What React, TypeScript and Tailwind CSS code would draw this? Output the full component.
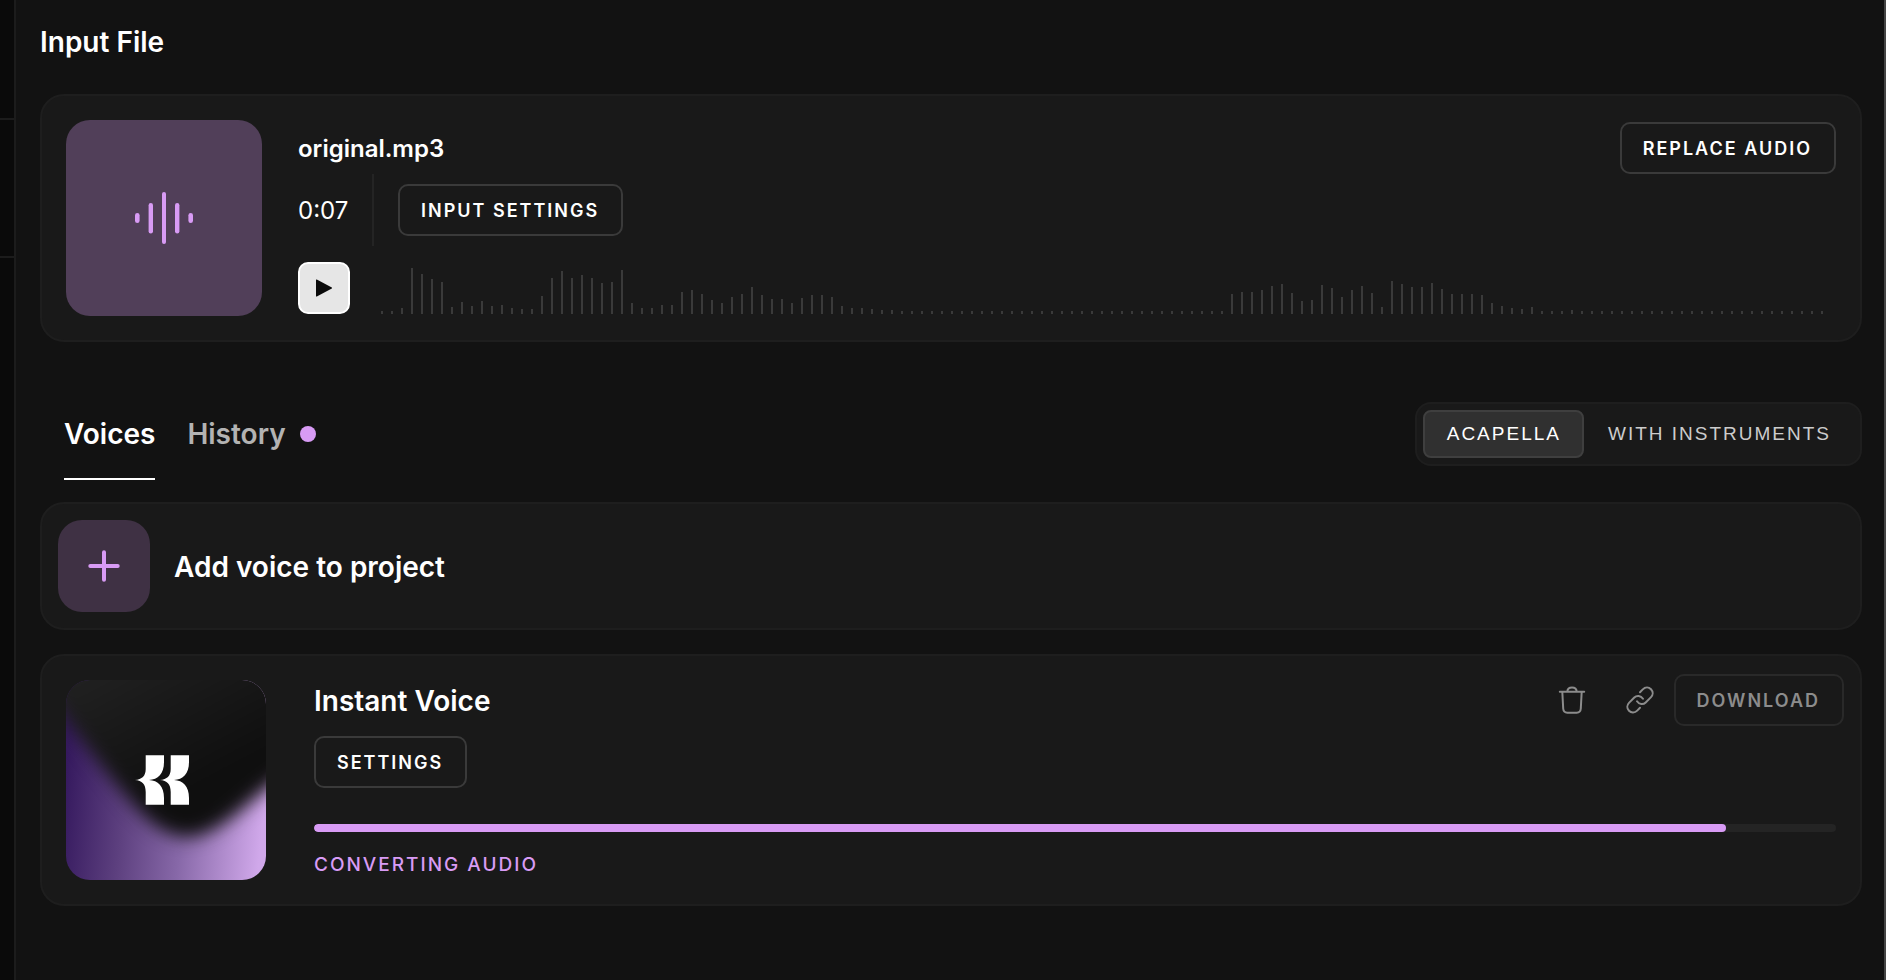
import React, { useState } from 'react';
import { clsx } from 'clsx';

interface OutlineButtonProps {
  children: React.ReactNode;
  disabled?: boolean;
  className?: string;
}

// Peak heights of the loaded clip, one per bar
const PEAKS: number[] = [
  3, 3, 6, 46, 40, 35, 32, 7, 12, 8, 13, 8, 9, 6, 5, 5, 18, 36, 43, 36, 39, 36, 31, 32, 44, 11, 6, 6, 9, 9,
  22, 24, 20, 14, 11, 17, 20, 27, 19, 15, 15, 11, 16, 19, 19, 17, 8, 6, 6, 5, 4, 4,
  ...Array(33).fill(3),
  20, 22, 22, 24, 28, 30, 21, 13, 14, 29, 26, 17, 24, 28, 21, 7, 33, 30, 27, 27, 31, 25, 20, 20, 20, 19,
  11, 8, 6, 5, 7, 3, 3, 3, 4,
  ...Array(25).fill(3),
];

const card = 'rounded-3xl border-2 border-[#1e1e1e] bg-[#191919]';
const title = 'pt-0.5 text-[28px] font-semibold leading-9';

function OutlineButton({ children, disabled, className }: OutlineButtonProps) {
  return (
    <button
      type="button"
      disabled={disabled}
      className={clsx(
        'h-[52px] flex-shrink-0 whitespace-nowrap rounded-[10px] border-2 pl-[21px] pr-[22px] pt-0.5 text-lg font-semibold uppercase tracking-[2px]',
        disabled ? 'border-[#292929] text-[#8c8c8c]' : 'border-[#3a3a3a] text-white',
        className
      )}
    >
      {children}
    </button>
  );
}

function Waveform() {
  return (
    <svg
      className="h-[52px] min-w-0 flex-1"
      viewBox="0 0 1455 52"
      preserveAspectRatio="xMinYMax meet"
      fill="#3a3a3a"
      aria-hidden="true"
    >
      {PEAKS.map((h, i) => (
        <rect key={i} x={i * 10} y={52 - h} width="2" height={h} />
      ))}
    </svg>
  );
}

function VoiceArtwork() {
  return (
    <svg className="h-[200px] w-[200px] flex-shrink-0 rounded-3xl" viewBox="0 0 200 200" aria-hidden="true">
      <defs>
        <linearGradient id="glow" x1="0" y1="0.45" x2="1" y2="0.55">
          <stop offset="0" stopColor="#361a5f" />
          <stop offset="0.3" stopColor="#5d407f" />
          <stop offset="0.6" stopColor="#8768a8" />
          <stop offset="1" stopColor="#d0a8ea" />
        </linearGradient>
        <linearGradient id="shade" gradientUnits="userSpaceOnUse" x1="20" y1="0" x2="110" y2="170">
          <stop offset="0" stopColor="#202020" />
          <stop offset="0.75" stopColor="#0f0f0f" />
        </linearGradient>
        <filter
          id="soft"
          filterUnits="userSpaceOnUse"
          x="-80"
          y="-80"
          width="360"
          height="360"
          colorInterpolationFilters="sRGB"
        >
          <feGaussianBlur stdDeviation="9" />
        </filter>
      </defs>
      <rect width="200" height="200" fill="url(#glow)" />
      <path
        d="M-60-60H260V66L200 109C178 127 148 157 122 157C96 157 76 135 60 116C40 93 22 69 0 40L-60-50Z"
        fill="url(#shade)"
        filter="url(#soft)"
      />
      <g fill="#fff">
        <path d="M98 75.3V82C98 94 92 99.6 83 100C92 100.4 98 106 98 118V124.7H79.7V112C79.7 104 76 100.6 69 100C76 99.4 79.7 96 79.7 89V75.3Z" />
        <path d="M123 75.3V82C123 94 117 99.6 108 100C117 100.4 123 106 123 118V124.7H104.7V112C104.7 104 101 100.6 94 100C101 99.4 104.7 96 104.7 89V75.3Z" />
      </g>
    </svg>
  );
}

export default function App() {
  const [tab, setTab] = useState<'voices' | 'history'>('voices');
  const [mode, setMode] = useState<'acapella' | 'instruments'>('acapella');
  const progress = 92.8;

  const modes = [
    { id: 'acapella', label: 'Acapella' },
    { id: 'instruments', label: 'With instruments' },
  ] as const;

  return (
    <div className="flex min-h-screen bg-[#121212] font-['Inter',sans-serif] text-white">
      {/* ── Edge of the side panel ── */}
      <aside className="w-4 flex-shrink-0 border-r-2 border-[#1c1c1c] bg-[#0a0a0a]">
        <div className="h-[120px] border-b-2 border-[#1c1c1c]" />
        <div className="h-[138px] border-b-2 border-[#1c1c1c]" />
      </aside>

      <main className="min-w-0 flex-1 border-r-2 border-[#444444] pl-6 pr-[22px]">
        <div className="pb-[34px] pt-[22px]">
          <h1 className={title}>Input File</h1>
        </div>

        {/* ── Input file ── */}
        <section className={clsx(card, 'flex items-center gap-9 p-6')}>
          <div className="flex h-[196px] w-[196px] flex-shrink-0 items-center justify-center rounded-3xl bg-[#513f59]">
            <svg className="h-[52px] w-[58px]" viewBox="0 0 58 52" fill="#d89bf5" aria-hidden="true">
              <rect x="0" y="21" width="4.6" height="10" rx="2.3" />
              <rect x="13.6" y="11" width="4.4" height="30.5" rx="2.2" />
              <rect x="27" y="0" width="4" height="52" rx="2" />
              <rect x="40" y="11" width="4.4" height="30.5" rx="2.2" />
              <rect x="53.4" y="21" width="4.6" height="10" rx="2.3" />
            </svg>
          </div>

          <div className="min-w-0 flex-1">
            <div className="flex items-center justify-between">
              <h2 className="pt-0.5 text-2xl font-semibold">original.mp3</h2>
              <OutlineButton>Replace audio</OutlineButton>
            </div>
            <div className="flex h-[72px] items-center">
              <span className="w-[74px] pt-0.5 text-2xl">0:07</span>
              <div className="mr-6 h-full w-0.5 bg-[#242424]" />
              <OutlineButton>Input settings</OutlineButton>
            </div>
            <div className="mt-4 flex items-center gap-[31px]">
              <button
                type="button"
                aria-label="Play"
                className="flex h-[52px] w-[52px] flex-shrink-0 items-center justify-center rounded-[10px] border-2 border-white bg-[#e6e6e6]"
              >
                <svg className="h-[18px] w-4" viewBox="0 0 16 18" fill="#0a0a0a">
                  <path d="M0 1Q0 .2 .8 .6L15.800 8.600Q16.400 9 15.800 9.400L.8 17.400Q0 17.800 0 17Z" />
                </svg>
              </button>
              <Waveform />
            </div>
          </div>
        </section>

        {/* ── Tabs ── */}
        <div className="mt-[60px] flex items-start justify-between">
          <div className="flex gap-8 pl-6" role="tablist">
            <button
              type="button"
              role="tab"
              aria-selected={tab === 'voices'}
              onClick={() => setTab('voices')}
              className={clsx(
                'h-[78px] border-b-2 pb-3 text-[28px] font-semibold',
                tab === 'voices' ? 'border-white text-white' : 'border-transparent text-[#b3b3b3]'
              )}
            >
              Voices
            </button>
            <button
              type="button"
              role="tab"
              aria-selected={tab === 'history'}
              onClick={() => setTab('history')}
              className={clsx(
                'flex h-[78px] items-center gap-3.5 border-b-2 pb-3 text-[28px] font-semibold',
                tab === 'history' ? 'border-white text-white' : 'border-transparent text-[#b3b3b3]'
              )}
            >
              History
              <span className="h-4 w-4 rounded-full bg-[#d89bf5]" />
            </button>
          </div>

          <div className="flex h-16 rounded-2xl border-2 border-[#1e1e1e] bg-[#191919] p-1.5">
            {modes.map((m) => (
              <button
                key={m.id}
                type="button"
                aria-pressed={mode === m.id}
                onClick={() => setMode(m.id)}
                className={clsx(
                  "rounded-lg border-2 pl-[22px] pr-[21px] font-['Liberation_Sans',sans-serif] text-[19px] uppercase tracking-[2px]",
                  mode === m.id
                    ? 'border-[#3f3f3f] bg-[#303030] text-white'
                    : 'border-transparent text-[#cccccc]'
                )}
              >
                {m.label}
              </button>
            ))}
          </div>
        </div>

        {/* ── Add voice ── */}
        <button type="button" className={clsx(card, 'mt-[22px] flex w-full items-center gap-6 px-4 py-4 text-left')}>
          <span className="flex h-[92px] w-[92px] items-center justify-center rounded-3xl bg-[#3f3144]">
            <svg className="h-8 w-8" viewBox="0 0 32 32" stroke="#d89bf5" strokeWidth="4" strokeLinecap="round">
              <path d="M16 2.300V29.700M2.300 16H29.700" />
            </svg>
          </span>
          <span className={title}>Add voice to project</span>
        </button>

        {/* ── Voice in conversion ── */}
        <section className={clsx(card, 'mt-6 flex gap-12 px-6 pb-6 pt-[18px]')}>
          <div className="pt-1.5">
            <VoiceArtwork />
          </div>
          <div className="min-w-0 flex-1">
            <div className="-mr-2 flex h-[52px] items-center">
              <h2 className={clsx(title, 'flex-1')}>Instant Voice</h2>
              <button type="button" aria-label="Delete" className="flex h-[52px] w-[68px] items-center justify-center text-[#8c8c8c]">
                <svg className="h-7 w-7" viewBox="0 0 28 28" fill="none" stroke="currentColor" strokeWidth="2" strokeLinecap="round" strokeLinejoin="round">
                  <path d="M1.800 5.800H26.200M4.300 5.800L5.200 22.500C5.400 25.300 6.800 26.700 9.300 26.700H18.700C21.200 26.700 22.600 25.300 22.800 22.500L23.700 5.800M9.300 5.500C9.500 3 11 1.600 14 1.600S18.500 3 18.700 5.500" />
                </svg>
              </button>
              <button type="button" aria-label="Copy link" className="flex h-[52px] w-[68px] items-center justify-center text-[#8c8c8c]">
                <svg className="h-7 w-7" viewBox="0 0 28 28" fill="none" stroke="currentColor" strokeWidth="2" strokeLinecap="round">
                  <path d="M11 15.300C13.300 18.700 17.300 18.900 19.700 16.500L24.800 11.400C27.200 9 27.300 5.600 25 3.200C22.700.900 19.200 1 16.800 3.400L14 6.200" />
                  <path d="M17 12.700C14.700 9.300 10.700 9.100 8.300 11.500L3.200 16.600C.8 19 .7 22.400 3 24.800C5.300 27.100 8.800 27 11.200 24.600L14 21.800" />
                </svg>
              </button>
              <OutlineButton disabled>Download</OutlineButton>
            </div>
            <OutlineButton className="mt-2.5">Settings</OutlineButton>
            <div
              role="progressbar"
              aria-label="Conversion progress"
              aria-valuenow={progress}
              className="mt-9 h-2 overflow-hidden rounded-full bg-[#242424]"
            >
              <div className="h-full rounded-full bg-[#d89bf5]" style={{ width: `${progress}%` }} />
            </div>
            <p className="mt-[21px] text-[19px] font-medium uppercase leading-6 tracking-[2px] text-[#d89bf5]">
              Converting audio
            </p>
          </div>
        </section>
      </main>
    </div>
  );
}
